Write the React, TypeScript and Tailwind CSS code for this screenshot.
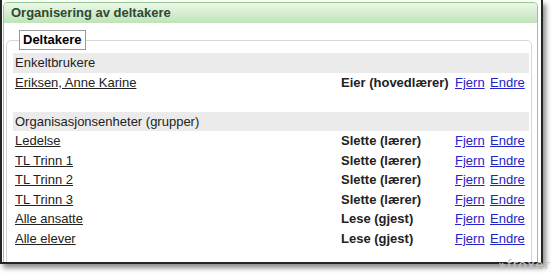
import React from 'react';

type Member = { name: string; role: string };

const users: Member[] = [{ name: 'Eriksen, Anne Karine', role: 'Eier (hovedlærer)' }];

const groups: Member[] = [
  { name: 'Ledelse', role: 'Slette (lærer)' },
  { name: 'TL Trinn 1', role: 'Slette (lærer)' },
  { name: 'TL Trinn 2', role: 'Slette (lærer)' },
  { name: 'TL Trinn 3', role: 'Slette (lærer)' },
  { name: 'Alle ansatte', role: 'Lese (gjest)' },
  { name: 'Alle elever', role: 'Lese (gjest)' },
];

function SectionRow({ title }: { title: string }) {
  return <div className="h-[19.5px] leading-[19.5px] bg-[#ebebeb] pl-[2px] text-[#222]">{title}</div>;
}

function MemberRow({ m }: { m: Member }) {
  return (
    <div className="grid grid-cols-[326px_114px_35px_1fr] h-[19.5px] leading-[19.5px] pl-[2px]">
      <a href="#" className="text-[#222] underline">{m.name}</a>
      <span className="font-bold text-[#222]">{m.role}</span>
      <a href="#" className="text-[#2323c9] underline">Fjern</a>
      <a href="#" className="text-[#2323c9] underline">Endre</a>
    </div>
  );
}

export default function App() {
  return (
    <div className="relative w-[553px] h-[274px] bg-white overflow-hidden font-['Liberation_Sans',Arial,sans-serif] text-[13px]">
      {/* Screenshot frame */}
      <div className="w-[543px] h-[264px] border-l-2 border-r-2 border-b-2 border-[#1f271f] shadow-[3px_4px_5px_rgba(0,0,0,0.45)] bg-white pt-[2px] pl-[1px] pr-[3px]">
        <div className="h-full border border-b-0 border-[#8fcb8a] rounded-t-[5px] bg-white overflow-hidden">
          {/* Header */}
          <div className="h-[20px] leading-[20px] pl-[7px] bg-gradient-to-b from-[#ecf7e9] to-[#bfe3b7] font-bold text-[#2d4a2d]">
            Organisering av deltakere
          </div>

          <fieldset className="mt-[7px] ml-[2px] mr-[5px] h-[260px] border border-[#d6d6d6] rounded-[5px] px-0 pt-[3px]">
            <legend className="ml-[12px] border border-[#9a9a9a] px-[3px] leading-[18px] font-bold text-black">
              Deltakere
            </legend>
            <div className="ml-[6px] mr-[2px]">
              <SectionRow title="Enkeltbrukere" />
              {users.map((m) => (
                <MemberRow key={m.name} m={m} />
              ))}
              <div className="h-[19.5px]" />
              <SectionRow title="Organisasjonsenheter (grupper)" />
              {groups.map((m) => (
                <MemberRow key={m.name} m={m} />
              ))}
            </div>
          </fieldset>
        </div>
      </div>

      {/* Watermark */}
      <div className="absolute left-[498px] top-[257px] text-[13px] leading-[15px] tracking-[1px] text-[#c4c4c4] font-['DejaVu_Sans',sans-serif]">
        »froxer
      </div>
    </div>
  );
}
